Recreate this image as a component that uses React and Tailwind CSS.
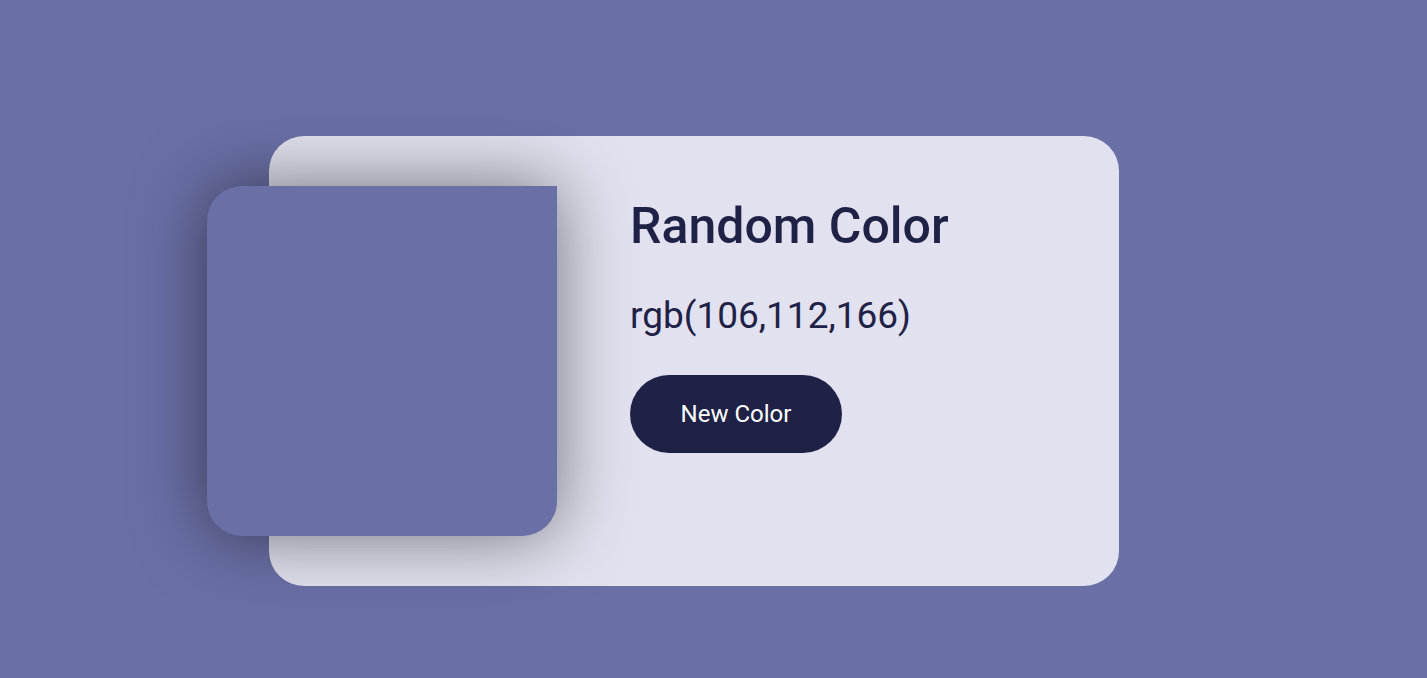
import React, { useState } from 'react'

const App = () => {
    const [color] = useState('rgb(106,112,166)')

    return (
        <div
            className="min-h-screen w-full bg-[#6a70a6] pt-[136px] pl-[269px]"
            style={{ fontFamily: 'Roboto, "Liberation Sans", sans-serif' }}
        >
            <div className="flex w-[850px] h-[450px] rounded-[35px] bg-[#e1e1ef]">
                <div className="shrink-0 w-[350px] h-[350px] -ml-[62px] mt-[50px] bg-[#6a70a6] rounded-[35px] rounded-tr-none shadow-[0_0_70px_rgba(0,0,0,0.5)]" />

                <div className="flex flex-col items-start pl-[73px] pt-[61px]">
                    <h1 className="text-[50px] leading-[59px] font-medium text-[#1f2246]">
                        Random Color
                    </h1>

                    <p className="mt-[38px] text-[37px] leading-[43px] text-[#1f2246]">
                        {color}
                    </p>

                    <button className="mt-[38px] w-[212px] h-[78px] rounded-full bg-[#1f2246] text-white text-[24px]">
                        New Color
                    </button>
                </div>
            </div>
        </div>
    )
}

export default App
